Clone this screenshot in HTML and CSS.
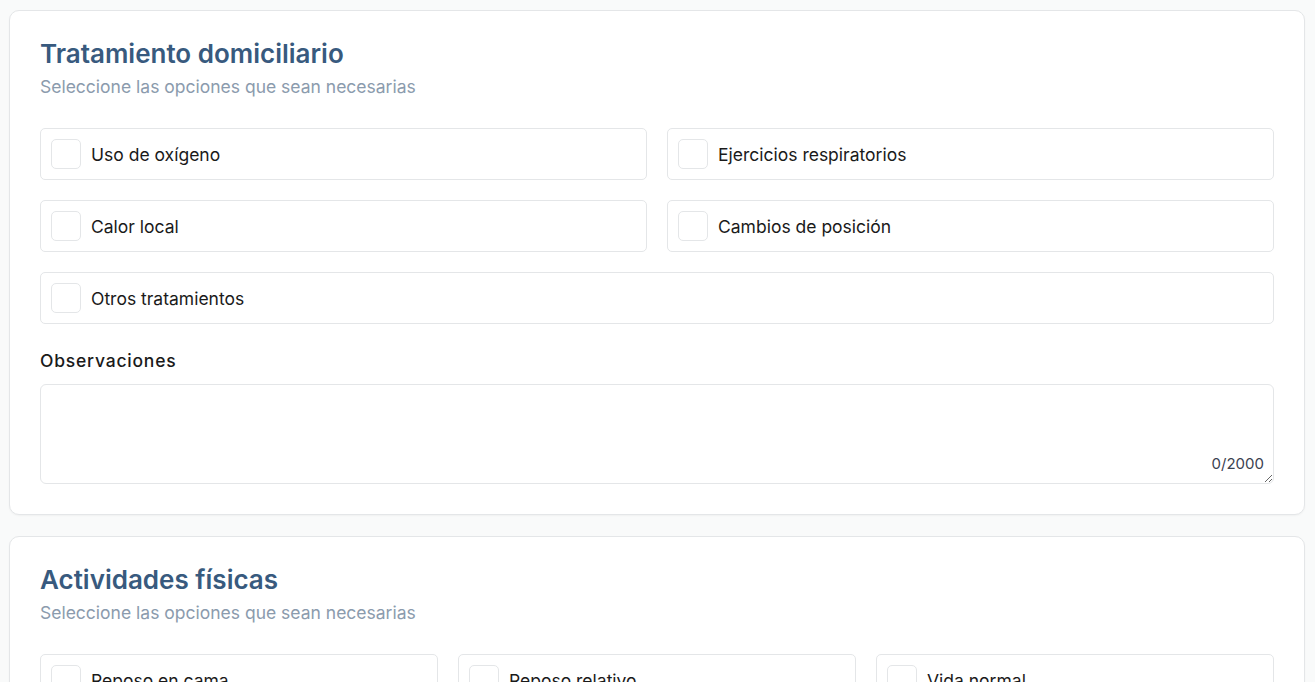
FILE: index.html
```html
<!DOCTYPE html>
<html lang="es">
<head>
<meta charset="utf-8">
<title>Tratamiento</title>
<link rel="stylesheet" href="styles.css">
</head>
<body>
<main class="page">
  <section class="card">
    <h2 class="card-title">Tratamiento domiciliario</h2>
    <p class="card-sub">Seleccione las opciones que sean necesarias</p>
    <div class="options cols-2">
      <label class="option"><input type="checkbox" class="check"><span>Uso de oxígeno</span></label>
      <label class="option"><input type="checkbox" class="check"><span>Ejercicios respiratorios</span></label>
      <label class="option"><input type="checkbox" class="check"><span>Calor local</span></label>
      <label class="option"><input type="checkbox" class="check"><span>Cambios de posición</span></label>
      <label class="option wide"><input type="checkbox" class="check"><span>Otros tratamientos</span></label>
    </div>
    <label class="field-label" for="obs">Observaciones</label>
    <div class="textarea-wrap">
      <textarea id="obs" class="textarea"></textarea>
      <span class="counter">0/2000</span>
    </div>
  </section>
  <section class="card">
    <h2 class="card-title">Actividades físicas</h2>
    <p class="card-sub">Seleccione las opciones que sean necesarias</p>
    <div class="options cols-3">
      <label class="option"><input type="checkbox" class="check"><span>Reposo en cama</span></label>
      <label class="option"><input type="checkbox" class="check"><span>Reposo relativo</span></label>
      <label class="option"><input type="checkbox" class="check"><span>Vida normal</span></label>
    </div>
  </section>
</main>
</body>
</html>
```
FILE: styles.css
```css
* { box-sizing: border-box; }
html, body {
  margin: 0;
  padding: 0;
  background: #f9fafa;
  font-family: Inter, "Noto Sans", "Liberation Sans", sans-serif;
}
.page {
  padding: 10px 10px 10px 9px;
  display: flex;
  flex-direction: column;
  gap: 21px;
}
.card {
  background: #ffffff;
  border: 1px solid #e4e6e8;
  border-radius: 10px;
  padding: 30px;
  box-shadow: 0 1px 2px rgba(0, 0, 0, 0.04);
}
.card-title {
  margin: 0;
  font-size: 26px;
  line-height: 26px;
  font-weight: 600;
  color: #385a7e;
}
.card-sub {
  margin: 8px 0 0;
  font-size: 17.5px;
  line-height: 24px;
  color: #8b9bad;
}
.options {
  margin-top: 29px;
  display: grid;
  gap: 20px;
}
.cols-2 { grid-template-columns: 1fr 1fr; }
.cols-3 { grid-template-columns: 1fr 1fr 1fr; }
.option {
  display: flex;
  align-items: center;
  gap: 10px;
  height: 52px;
  padding: 0 10px;
  border: 1px solid #e4e6e8;
  border-radius: 5px;
  background: #fff;
  font-size: 17.5px;
  color: #1a1a1a;
  cursor: pointer;
}
.option span { padding-top: 1px; }
.option.wide { grid-column: 1 / -1; }
.check {
  appearance: none;
  -webkit-appearance: none;
  margin: 0;
  width: 30px;
  height: 30px;
  border: 1px solid #e4e6e8;
  border-radius: 5px;
  background: #fff;
  flex: none;
}
.field-label {
  display: block;
  margin-top: 25px;
  font-size: 17.5px;
  line-height: 24px;
  font-weight: 500;
  letter-spacing: 0.045em;
  color: #1a1a1a;
}
.textarea-wrap {
  position: relative;
  margin-top: 11px;
}
.textarea {
  display: block;
  width: 100%;
  height: 100px;
  border: 1px solid #e4e6e8;
  border-radius: 6px;
  resize: vertical;
  padding: 10px;
  font-family: inherit;
  font-size: 16px;
  background: #fff;
}
.counter {
  position: absolute;
  right: 10px;
  bottom: 11px;
  font-size: 15px;
  line-height: 18px;
  color: #3b4250;
}
```
